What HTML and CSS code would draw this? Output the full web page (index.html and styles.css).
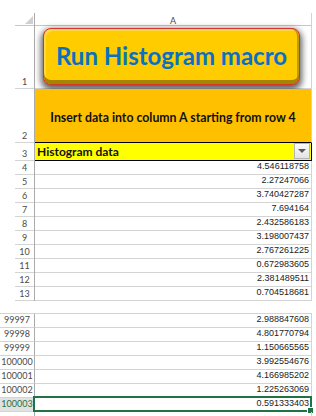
FILE: index.html
```html
<!DOCTYPE html>
<html>
<head>
<meta charset="utf-8">
<link rel="stylesheet" href="styles.css">
</head>
<body>
<div class="sheet">
  <div class="row hdr">
    <div class="rh corner"><span class="tri"></span></div>
    <div class="ch">A</div>
  </div>
  <div class="row top r1">
    <div class="rh">1</div>
    <div class="cell c-btn"><div class="btn">Run Histogram macro</div></div>
  </div>
  <div class="row top r2">
    <div class="rh">2</div>
    <div class="cell c-note">Insert data into column A starting from row 4</div>
  </div>
  <div class="row top r3">
    <div class="rh">3</div>
    <div class="cell c-title"><span>Histogram data</span><span class="filter"><span class="arrow"></span></span></div>
  </div>
  <div class="row top"><div class="rh">4</div><div class="cell num">4.546118758</div></div>
  <div class="row top"><div class="rh">5</div><div class="cell num">2.27247066</div></div>
  <div class="row top"><div class="rh">6</div><div class="cell num">3.740427287</div></div>
  <div class="row top"><div class="rh">7</div><div class="cell num">7.694164</div></div>
  <div class="row top"><div class="rh">8</div><div class="cell num">2.432586183</div></div>
  <div class="row top"><div class="rh">9</div><div class="cell num">3.198007437</div></div>
  <div class="row top"><div class="rh">10</div><div class="cell num">2.767261225</div></div>
  <div class="row top"><div class="rh">11</div><div class="cell num">0.672983605</div></div>
  <div class="row top"><div class="rh">12</div><div class="cell num">2.381489511</div></div>
  <div class="row top"><div class="rh">13</div><div class="cell num">0.704518681</div></div>
  <div class="gap"></div>
  <div class="row bot"><div class="rh">99997</div><div class="cell num">2.988847608</div></div>
  <div class="row bot"><div class="rh">99998</div><div class="cell num">4.801770794</div></div>
  <div class="row bot"><div class="rh">99999</div><div class="cell num">1.150665565</div></div>
  <div class="row bot"><div class="rh">100000</div><div class="cell num">3.992554676</div></div>
  <div class="row bot"><div class="rh">100001</div><div class="cell num">4.166985202</div></div>
  <div class="row bot"><div class="rh">100002</div><div class="cell num">1.225263069</div></div>
  <div class="row bot sel"><div class="rh">100003</div><div class="cell num">0.591333403<span class="selbox"></span><span class="handle"></span></div></div>
  <div class="row bot"><div class="rh"></div><div class="cell num"></div></div>
</div>
</body>
</html>
```
FILE: styles.css
```css
* { box-sizing: border-box; margin: 0; padding: 0; }
html, body { width: 316px; height: 416px; overflow: hidden; background: #fff; }

.sheet { display: flex; flex-direction: column; width: 316px; }

.row { display: flex; height: 14px; flex: none; }

.rh {
  width: 35px;
  flex: none;
  border-right: 1px solid #ababab;
  font-family: Lato, "Liberation Sans", sans-serif;
  font-size: 9px;
  line-height: 11px;
  color: #4a4a4a;
  display: flex;
  align-items: flex-end;
  justify-content: center;
  padding-bottom: 2px;
}
.top .rh {
  padding-left: 15px;
  background: linear-gradient(#d4d4d4, #d4d4d4) no-repeat 15px 100% / 20px 1px;
}
.bot .rh { border-bottom: 1px solid #d4d4d4; }

.cell {
  width: 277px;
  flex: none;
  border-right: 1px solid #d4d4d4;
  border-bottom: 1px solid #d4d4d4;
  position: relative;
}

.num {
  font-family: "Liberation Sans", Arial, sans-serif;
  font-size: 9px;
  line-height: 11px;
  color: #222;
  display: flex;
  align-items: flex-end;
  justify-content: flex-end;
  padding: 0 2px 2px 0;
}

/* column header */
.hdr { height: 26px; }
.hdr .rh {
  margin-top: 13px;
  height: 13px;
  padding: 0 1px 2px 15px;
  justify-content: flex-end;
  background: linear-gradient(#c6c6c6, #c6c6c6) no-repeat 15px 100% / 20px 1px;
}
.tri {
  width: 0;
  height: 0;
  border-left: 8px solid transparent;
  border-bottom: 8px solid #cfcfcf;
}
.ch {
  margin-top: 13px;
  height: 13px;
  width: 277px;
  border-right: 1px solid #d4d4d4;
  border-bottom: 1px solid #c6c6c6;
  font-family: Lato, "Liberation Sans", sans-serif;
  font-size: 9px;
  line-height: 11px;
  color: #4a4a4a;
  text-align: center;
  padding-top: 2px;
}

/* row 1: macro button */
.r1 { height: 63px; }
.c-btn { padding: 2px 0 0 8px; }
.btn {
  width: 257px;
  height: 57px;
  border-radius: 8px;
  border: 1px solid #d6342a;
  background: #ffcc00;
  box-shadow:
    inset 0 -4px 0 #a48400,
    inset -2px 0 0 #c09c00,
    inset 2px 2px 0 #ffd84a,
    0 3px 6px 2px rgba(0, 0, 0, 0.62);
  display: flex;
  align-items: center;
  justify-content: center;
  padding-bottom: 3px;
  font-family: Lato, "Open Sans", sans-serif;
  font-weight: 700;
  font-size: 24px;
  color: #0b70c2;
}

/* row 2: note */
.r2 { height: 54px; }
.c-note {
  background: #ffc000;
  border-bottom: 1px solid #000;
  display: flex;
  align-items: center;
  justify-content: center;
  padding-top: 3px;
  font-family: Lato, "Open Sans", sans-serif;
  font-weight: 700;
  font-size: 12.3px;
  color: #111;
}

/* row 3: title */
.r3 { height: 18px; }
.c-title {
  background: #ffff00;
  border-bottom: 1px solid #000;
  border-right: 1px solid #000;
  display: flex;
  align-items: flex-end;
  padding: 0 1px 2px 2px;
  font-family: Lato, "Open Sans", sans-serif;
  font-weight: 700;
  font-size: 12px;
  line-height: 13px;
  color: #111;
}
.filter {
  margin-left: auto;
  align-self: flex-start;
  width: 16px;
  height: 16px;
  margin-bottom: -2px;
  border: 1px solid #b5b5b5;
  background: linear-gradient(#fbfbfb, #e4e4e4);
  display: flex;
  align-items: center;
  justify-content: center;
}
.arrow {
  width: 0;
  height: 0;
  border-left: 4px solid transparent;
  border-right: 4px solid transparent;
  border-top: 4px solid #5a5a5a;
}

/* gap between row 13 and 99997 */
.gap {
  height: 13px;
  width: 312px;
  flex: none;
  border-bottom: 1px solid #d4d4d4;
}

/* selected row */
.sel .rh { background: #e1e1e1; color: #217346; }
.selbox {
  position: absolute;
  left: -2px;
  top: -2px;
  right: -1px;
  bottom: -1px;
  border: 2px solid #217346;
}
.handle {
  position: absolute;
  right: -3px;
  bottom: -3px;
  width: 7px;
  height: 7px;
  background: #217346;
  border: 1px solid #fff;
}
```
